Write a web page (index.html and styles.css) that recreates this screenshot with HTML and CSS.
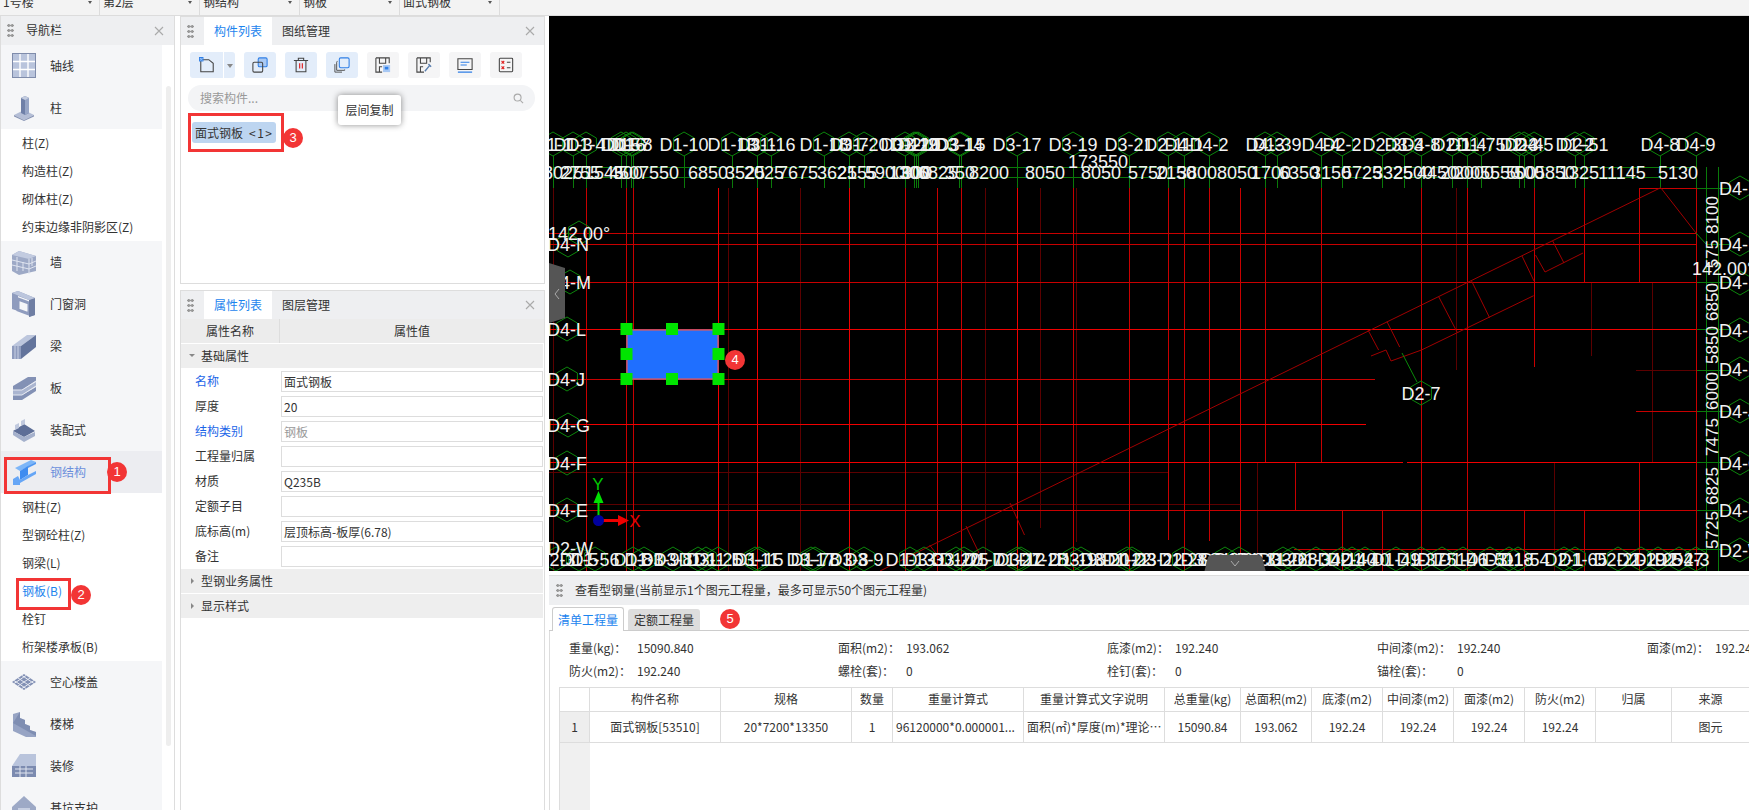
FILE: index.html
```html
<!DOCTYPE html>
<html lang="zh">
<head>
<meta charset="utf-8">
<title>查看型钢量</title>
<link rel="stylesheet" href="styles.css">
</head>
<body>
<div class="page">
  <div class="topbar">
    <div class="top-cell"><span>1号楼</span><i class="top-arrow"></i></div>
    <div class="top-cell"><span>第2层</span><i class="top-arrow"></i></div>
    <div class="top-cell"><span>钢结构</span><i class="top-arrow"></i></div>
    <div class="top-cell"><span>钢板</span><i class="top-arrow"></i></div>
    <div class="top-cell"><span>面式钢板</span><i class="top-arrow"></i></div>
  </div>
  <div class="main">
    <aside class="nav">
      <div class="panel-head"><i class="grip"></i><span class="nav-title">导航栏</span>
        <svg class="close" viewBox="0 0 10 10"><path d="M1 1L9 9M9 1L1 9"/></svg></div>
      <div class="nav-body">
        <div class="nav-list">
          <div class="nav-row"><svg class="nav-ico" viewBox="0 0 24 26"><rect x="0.5" y="0.5" width="23" height="24" fill="#b9c4dc" stroke="#7f8cab"/><path d="M8 1V24M16 1V24M1 8.5H23M1 16.5H23" stroke="#fff" stroke-width="1.4"/></svg><span>轴线</span></div>
          <div class="nav-row"><svg class="nav-ico" viewBox="0 0 24 26"><path d="M2 20L12 15L22 20L12 25Z" fill="#b4bed6"/><path d="M2 20V21.5L12 26V25ZM22 20V21.5L12 26V25Z" fill="#8894b4"/><path d="M9 3L13 1L17 3V18L13 20L9 18Z" fill="#6f80a8"/><path d="M13 4V20L17 18V3Z" fill="#96a5c6"/><path d="M9 3L13 1L17 3L13 5Z" fill="#c3cce0"/></svg><span>柱</span></div>
          <div class="nav-sub">柱(Z)</div>
          <div class="nav-sub">构造柱(Z)</div>
          <div class="nav-sub">砌体柱(Z)</div>
          <div class="nav-sub">约束边缘非阴影区(Z)</div>
          <div class="nav-row"><svg class="nav-ico" viewBox="0 0 24 26"><path d="M0 6L7 2L24 7V22L7 26L0 22Z" fill="#9da9c6"/><path d="M0 6L7 2L24 7L17 10Z" fill="#c2cbe0"/><path d="M17 10V25M0 11L17 15L24 12M0 16L17 20L24 17M5 8V22M11 13V22M20 9V17" stroke="#dfe4ef" stroke-width="1" fill="none"/></svg><span>墙</span></div>
          <div class="nav-row"><svg class="nav-ico" viewBox="0 0 24 26"><path d="M0 2L6 0L23 7V24L17 26L17 9L6 5V20L0 18Z" fill="#8f9cbe"/><path d="M6 8L17 12V23L6 19Z" fill="none" stroke="#8f9cbe" stroke-width="3"/><path d="M17 9L23 7V24L17 26Z" fill="#6f7ea3"/><path d="M0 2L6 0L23 7L17 9Z" fill="#bcc6dd"/></svg><span>门窗洞</span></div>
          <div class="nav-row"><svg class="nav-ico" viewBox="0 0 24 26"><path d="M0 13L15 2L24 2L9 13Z" fill="#bcc6dd"/><path d="M0 13H9V26H0Z" fill="#8f9cbe"/><path d="M9 13L24 2V14L9 26Z" fill="#63749c"/><path d="M3 13V26M6 13V26" stroke="#c9d1e4"/></svg><span>梁</span></div>
          <div class="nav-row"><svg class="nav-ico" viewBox="0 0 24 26"><path d="M1 11L16 2L24 2V6L10 15H1Z" fill="#8391b5"/><path d="M1 15H10L24 7V11L10 20H1Z" fill="#aab5d0"/><path d="M1 20H10L24 12V16L10 25H1Z" fill="#8391b5"/><path d="M1 15H10L24 6M1 20H10L24 11" stroke="#e5e8f1" fill="none"/></svg><span>板</span></div>
          <div class="nav-row"><svg class="nav-ico" viewBox="0 0 24 26"><path d="M1 14L12 7L23 14L12 20Z" fill="#5d6e97"/><path d="M1 14V18L12 25L23 19V15L12 20Z" fill="#a5b1cc"/><path d="M3 8L7 6V11L3 13ZM9 4L13 2V7L9 9Z" fill="#c0c9de"/></svg><span>装配式</span></div>
          <div class="nav-row nav-on"><svg class="nav-ico" viewBox="0 0 24 26"><path d="M3 9L19 1L24 3L8 12Z" fill="#7db6f8"/><path d="M8 12L16 7V16L8 21Z" fill="#3f8cf0"/><path d="M16 7L24 3V5L16 9Z" fill="#4f97f2"/><path d="M1 20L6 17L8 21L16 16L24 12V15L8 24V26H1Z" fill="#66a6f6"/></svg><span>钢结构</span></div>
          <div class="nav-sub">钢柱(Z)</div>
          <div class="nav-sub">型钢砼柱(Z)</div>
          <div class="nav-sub">钢梁(L)</div>
          <div class="nav-sub nav-cur">钢板(B)</div>
          <div class="nav-sub">栓钉</div>
          <div class="nav-sub">桁架楼承板(B)</div>
          <div class="nav-row"><svg class="nav-ico" viewBox="0 0 24 26"><path d="M0 13L12 5L24 13L12 21Z" fill="#8391b5"/><path d="M6 9L18 17M10 6.500L22 14.500M2 11.500L14 19.500M18 9L6 17M14 6.500L2 14.500M22 11.500L10 19.500" stroke="#e4e8f1"/></svg><span>空心楼盖</span></div>
          <div class="nav-row"><svg class="nav-ico" viewBox="0 0 24 26"><path d="M1 3L8 1V7L13 9V13L18 15V19L24 21V26H14L1 20Z" fill="#97a4c4"/><path d="M8 1V7L13 9V13L18 15V19L24 21L24 25L1 12Z" fill="#6c7ca4" opacity=".55"/></svg><span>楼梯</span></div>
          <div class="nav-row"><svg class="nav-ico" viewBox="0 0 24 26"><path d="M8 1H24V13H0Z" fill="#b9c4dc"/><path d="M0 13H24V24H0Z" fill="#7c8bb0"/><path d="M3 16H21M3 20H21M8 13V24M14 13V24" stroke="#dfe4ef"/></svg><span>装修</span></div>
          <div class="nav-row"><svg class="nav-ico" viewBox="0 0 24 26"><path d="M0 12L12 1L24 12V26H0Z" fill="#9da9c6"/><path d="M6 13H18V24H6Z" fill="#c7cfe2"/></svg><span>基坑支护</span></div>
        </div>
        <i class="nav-thumb"></i>
      </div>
    </aside>

    <section class="mid">
      <div class="panel list-panel">
        <div class="panel-head"><i class="grip"></i><span class="tab tab-on">构件列表</span><span class="tab">图纸管理</span>
          <svg class="close close-mid" viewBox="0 0 10 10"><path d="M1 1L9 9M9 1L1 9"/></svg></div>
        <div class="toolbar">
          <div class="tool tool-split"><div class="tool-main"><svg viewBox="0 0 18 18"><path d="M2 3H11L16 7V16.500H2Z" fill="none" stroke="#444" stroke-width="1.200"/><rect x="0" y="0" width="5" height="5" fill="#2f7fe6"/><path d="M1 1H2V2H1ZM3 1H4V2H3ZM2 2H3V3H2ZM1 3H2V4H1ZM3 3H4V4H3Z" fill="#cfe2fa"/></svg></div><div class="tool-drop"><i></i></div></div>
          <div class="tool"><svg viewBox="0 0 18 18"><rect x="7" y="1" width="10" height="10" rx="1.500" fill="#a9c9f4" stroke="#2f7fe6" stroke-width="1.200"/><rect x="1" y="6" width="11" height="11" rx="1.500" fill="none" stroke="#444" stroke-width="1.200"/></svg></div>
          <div class="tool"><svg viewBox="0 0 18 18"><path d="M1 4H17M6 4V1.500H12V4M3.500 4V16.500H14.500V4" fill="none" stroke="#444" stroke-width="1.200"/><path d="M7.500 7V13M10.500 7V13" stroke="#e02020" stroke-width="1.300"/></svg></div>
          <div class="tool"><svg viewBox="0 0 18 18"><rect x="6" y="1" width="11" height="11" rx="1.500" fill="none" stroke="#2f7fe6" stroke-width="1.200"/><path d="M4 5H3.500Q3 5 3 6V15H12V14M1 8V17H9" fill="none" stroke="#555" stroke-width="1.100"/></svg></div>
          <div class="tool tool-gray"><svg viewBox="0 0 18 18"><path d="M1 1H16V7M1 1V17H8M5 1V7H12V1M5 17V11H8" fill="none" stroke="#444" stroke-width="1.200"/><rect x="9" y="9" width="8" height="8" fill="#a9c9f4"/><rect x="11" y="11" width="4" height="3" fill="#2f7fe6"/></svg></div>
          <div class="tool tool-gray"><svg viewBox="0 0 18 18"><path d="M1 1H16V6M1 1V17H9M5 1V7H12V1M5 17V11H8" fill="none" stroke="#444" stroke-width="1.200"/><path d="M10 16L15 10M14 8L17 11" stroke="#5a7fb0" stroke-width="1.600"/></svg></div>
          <div class="tool tool-gray"><svg viewBox="0 0 18 18"><path d="M1 2H17V14H1Z" fill="none" stroke="#444" stroke-width="1.200"/><path d="M4 6H14M4 9H11M1 17H17" stroke="#2f7fe6" stroke-width="1.200"/></svg></div>
          <div class="tool tool-gray"><svg viewBox="0 0 18 18"><rect x="1.500" y="1.500" width="15" height="15" rx="1" fill="none" stroke="#444" stroke-width="1.200"/><path d="M4 4.500L7 7.500M7 4.500L4 7.500M4 10.500L7 13.500M7 10.500L4 13.500" stroke="#e02020" stroke-width="1.200"/><path d="M10 6H14M10 12H14" stroke="#444" stroke-width="1.200"/></svg></div>
        </div>
        <div class="search"><span>搜索构件...</span><svg viewBox="0 0 12 12"><circle cx="5" cy="5" r="3.800"/><path d="M8 8L11 11"/></svg></div>
        <div class="item">面式钢板<span class="item-n">&lt;1&gt;</span></div>
      </div>

      <div class="panel prop-panel">
        <div class="panel-head"><i class="grip"></i><span class="tab tab-on">属性列表</span><span class="tab">图层管理</span>
          <svg class="close close-mid" viewBox="0 0 10 10"><path d="M1 1L9 9M9 1L1 9"/></svg></div>
        <div class="prop-head"><span class="prop-h1">属性名称</span><span class="prop-h2">属性值</span></div>
        <div class="group"><i class="tri-down"></i>基础属性</div>
        <div class="prop"><span class="prop-k prop-blue">名称</span><span class="prop-v">面式钢板</span></div>
        <div class="prop"><span class="prop-k">厚度</span><span class="prop-v">20</span></div>
        <div class="prop"><span class="prop-k prop-blue">结构类别</span><span class="prop-v prop-off">钢板</span></div>
        <div class="prop"><span class="prop-k">工程量归属</span><span class="prop-v"></span></div>
        <div class="prop"><span class="prop-k">材质</span><span class="prop-v">Q235B</span></div>
        <div class="prop"><span class="prop-k">定额子目</span><span class="prop-v"></span></div>
        <div class="prop"><span class="prop-k">底标高(m)</span><span class="prop-v">层顶标高-板厚(6.78)</span></div>
        <div class="prop"><span class="prop-k">备注</span><span class="prop-v"></span></div>
        <div class="group"><i class="tri-right"></i>型钢业务属性</div>
        <div class="group"><i class="tri-right"></i>显示样式</div>
      </div>
    </section>

    <section class="right">
      <div class="canvas">
        <svg class="cad" viewBox="549 16 1200 555" preserveAspectRatio="none">
          <defs><polygon id="hx" points="0,-12 10.400,-6 10.400,6 0,12 -10.400,6 -10.400,-6"/></defs>
          <g class="g-line">
            <path d="M553 167.500H1696M553 177.500H1660"/>
            <path d="M553.500 156V188M573.500 156V188M586.500 156V188M621.500 156V188M626.500 156V188M631.500 156V188M633.500 156V188M684.500 156V188M732.500 156V188M757.500 156V188M771.500 156V188M824.500 156V188M849.500 156V188M864.500 156V188M905.500 156V188M914.500 156V188M916.500 156V188M918.500 156V188M959.500 156V188M961.500 156V188M1017.500 156V188M1073.500 156V188M1129.500 156V188M1168.500 156V188M1184.500 156V188M1209.500 156V188M1265.500 156V188M1277.500 156V188M1321.500 156V188M1342.500 156V188M1382.500 156V188M1404.500 156V188M1421.500 156V188M1452.500 156V188M1467.500 156V188M1481.500 156V188M1519.500 156V188M1524.500 156V188M1534.500 156V188M1575.500 156V188M1584.500 156V188M1660.500 156V188M1696.500 156V188"/>
            <path d="M1706.500 167V571M1718.500 167V571M1696 188.500H1730M1706 244.500H1730M1696 282.500H1730M1696 329.500H1730M1696 370.500H1730M1696 411.500H1730M1696 462.500H1730M1696 510.500H1730M1696 549.500H1730"/>
          </g>
          <g class="r-dim">
            <path d="M553.500 188V571M728.500 188V571M800.500 188V571M985.500 188V571M1040.500 188V528M1076.500 188V542M1456.500 188V370M1591.500 282V356M1652.500 282V462M1257.500 462V571M1554.500 462V571M549 472.500H1168M549 504.500H1240M1636 370.500H1696"/>
          </g>
          <g class="r-mid">
            <path d="M586.500 188V571M626.500 188V571M633.500 188V571M905.500 188V571M937.500 188V571M961.500 188V571M1073.500 188V571M1129.500 188V571M1168.500 188V540M1184.500 188V571M1209.500 188V541M1240.500 188V571M1265.500 188V462M1321.500 188V462M1421.500 188V571M1467.500 188V571M1534.500 188V367M1584.500 188V282M1639.500 188V282M1639.500 462V571M1696.500 188V571M1295.500 462V510M1342.500 510V571M1382.500 510V571M1524.500 510V571M1584.500 510V571M1639.500 188H1696M549 379.500H1375"/>
            <path d="M549 233.500H1696M549 244.500H1696M549 282.500H1696M549 510.500H1696M1294 549.500H1696M1636 411.500H1696"/>
          </g>
          <g class="r-hi">
            <path d="M718.500 188V571M757.500 188V571M849.500 188V571M1017.500 188V571M549 329.500H1696M549 424.500H1366M549 462.500H1403M1407 462.500H1696"/>
          </g>
          <g class="diag">
            <path d="M1660.700 187.700L928 547L880 571M1660.700 187.700L1696 233"/>
            <path d="M1583 253L1545 272L1535.500 255M1533.600 295.700L1421.500 350L1391 361L1386 350L1371 356"/>
            <path d="M1552.700 241L1564 263M1522 256L1534 281M1471.600 281L1489.600 317.700M1438.700 296.700L1457 332M1387 321.700L1399.700 347M1368 330L1378.600 350M1010 503L1024.500 535M966 526L979 553M929.600 545L945 565"/>
          </g>
          <path class="g-thin" d="M1696 233L1706 244M1402 353L1417 382"/>
          <g class="hexes">
            <use href="#hx" x="553" y="144"/><use href="#hx" x="573" y="144"/><use href="#hx" x="586" y="144"/><use href="#hx" x="621" y="144"/><use href="#hx" x="626" y="144"/><use href="#hx" x="631" y="144"/><use href="#hx" x="633" y="144"/><use href="#hx" x="684" y="144"/><use href="#hx" x="732" y="144"/><use href="#hx" x="757" y="144"/><use href="#hx" x="771" y="144"/><use href="#hx" x="824" y="144"/><use href="#hx" x="849" y="144"/><use href="#hx" x="864" y="144"/><use href="#hx" x="905" y="144"/><use href="#hx" x="914" y="144"/><use href="#hx" x="916" y="144"/><use href="#hx" x="918" y="144"/><use href="#hx" x="959" y="144"/><use href="#hx" x="961" y="144"/><use href="#hx" x="1017" y="144"/><use href="#hx" x="1073" y="144"/><use href="#hx" x="1129" y="144"/><use href="#hx" x="1168" y="144"/><use href="#hx" x="1184" y="144"/><use href="#hx" x="1209" y="144"/><use href="#hx" x="1265" y="144"/><use href="#hx" x="1277" y="144"/><use href="#hx" x="1321" y="144"/><use href="#hx" x="1342" y="144"/><use href="#hx" x="1382" y="144"/><use href="#hx" x="1404" y="144"/><use href="#hx" x="1421" y="144"/><use href="#hx" x="1452" y="144"/><use href="#hx" x="1467" y="144"/><use href="#hx" x="1481" y="144"/><use href="#hx" x="1519" y="144"/><use href="#hx" x="1524" y="144"/><use href="#hx" x="1534" y="144"/><use href="#hx" x="1575" y="144"/><use href="#hx" x="1584" y="144"/><use href="#hx" x="1660" y="144"/><use href="#hx" x="1696" y="144"/>
            <use href="#hx" x="579" y="233"/><use href="#hx" x="568" y="245"/><use href="#hx" x="570" y="282"/><use href="#hx" x="567" y="329"/><use href="#hx" x="567" y="379"/><use href="#hx" x="568" y="425"/><use href="#hx" x="567" y="463"/><use href="#hx" x="567" y="510"/>
            <use href="#hx" x="1740" y="188"/><use href="#hx" x="1740" y="244"/><use href="#hx" x="1740" y="283"/><use href="#hx" x="1740" y="330"/><use href="#hx" x="1740" y="369"/><use href="#hx" x="1740" y="411"/><use href="#hx" x="1740" y="463"/><use href="#hx" x="1740" y="510"/><use href="#hx" x="1740" y="550"/>
            <use href="#hx" x="1421" y="393"/>
            <use href="#hx" x="556" y="559"/><use href="#hx" x="579" y="559"/><use href="#hx" x="595" y="559"/><use href="#hx" x="633" y="559"/><use href="#hx" x="644" y="559"/><use href="#hx" x="673" y="559"/><use href="#hx" x="698" y="559"/><use href="#hx" x="706" y="559"/><use href="#hx" x="718" y="559"/><use href="#hx" x="755" y="559"/><use href="#hx" x="759" y="559"/><use href="#hx" x="811" y="559"/><use href="#hx" x="815" y="559"/><use href="#hx" x="849" y="559"/><use href="#hx" x="864" y="559"/><use href="#hx" x="910" y="559"/><use href="#hx" x="924" y="559"/><use href="#hx" x="956" y="559"/><use href="#hx" x="964" y="559"/><use href="#hx" x="983" y="559"/><use href="#hx" x="1017" y="559"/><use href="#hx" x="1021" y="559"/><use href="#hx" x="1073" y="559"/><use href="#hx" x="1081" y="559"/><use href="#hx" x="1127" y="559"/><use href="#hx" x="1132" y="559"/><use href="#hx" x="1183" y="559"/><use href="#hx" x="1225" y="559"/><use href="#hx" x="1239" y="559"/><use href="#hx" x="1283" y="559"/><use href="#hx" x="1293" y="559"/><use href="#hx" x="1316" y="559"/><use href="#hx" x="1342" y="559"/><use href="#hx" x="1352" y="559"/><use href="#hx" x="1365" y="559"/><use href="#hx" x="1396" y="559"/><use href="#hx" x="1421" y="559"/><use href="#hx" x="1442" y="559"/><use href="#hx" x="1463" y="559"/><use href="#hx" x="1490" y="559"/><use href="#hx" x="1509" y="559"/><use href="#hx" x="1518" y="559"/><use href="#hx" x="1564" y="559"/><use href="#hx" x="1575" y="559"/><use href="#hx" x="1618" y="559"/><use href="#hx" x="1641" y="559"/><use href="#hx" x="1658" y="559"/><use href="#hx" x="1679" y="559"/><use href="#hx" x="1696" y="559"/>
          </g>
          <g class="cad-text">
            <text x="553" y="151">D1-1</text><text x="573" y="151">D1-3</text><text x="586" y="151">D1-4</text><text x="621" y="151">D1-5</text><text x="626" y="151">D1-6</text><text x="631" y="151">D1-7</text><text x="633" y="151">D1-8</text><text x="684" y="151">D1-10</text><text x="732" y="151">D1-13</text><text x="757" y="151">D3-1</text><text x="771" y="151">D1-16</text><text x="824" y="151">D1-18</text><text x="849" y="151">D3-7</text><text x="864" y="151">D1-20</text><text x="905" y="151">D3-12</text><text x="914" y="151">D1-19</text><text x="916" y="151">D3-10</text><text x="918" y="151">D2-2</text><text x="959" y="151">D3-14</text><text x="961" y="151">D3-15</text><text x="1017" y="151">D3-17</text><text x="1073" y="151">D3-19</text><text x="1129" y="151">D3-21</text><text x="1168" y="151">D2-11</text><text x="1184" y="151">D4-1</text><text x="1209" y="151">D4-2</text><text x="1265" y="151">D4-3</text><text x="1277" y="151">D1-39</text><text x="1321" y="151">D4-4</text><text x="1342" y="151">D2-2</text><text x="1382" y="151">D2-3</text><text x="1404" y="151">D3-3</text><text x="1421" y="151">D4-8</text><text x="1452" y="151">D2-1</text><text x="1467" y="151">D1-4</text><text x="1481" y="151">D1-75</text><text x="1519" y="151">D2-3</text><text x="1524" y="151">D2-4</text><text x="1534" y="151">D4-5</text><text x="1575" y="151">D1-2</text><text x="1584" y="151">D2-51</text><text x="1660" y="151">D4-8</text><text x="1696" y="151">D4-9</text>
            <text x="563" y="179">8025</text><text x="580" y="179">2755</text><text x="604" y="179">1545</text><text x="624" y="179">450</text><text x="628" y="179">300</text><text x="659" y="179">7550</text><text x="708" y="179">6850</text><text x="745" y="179">3525</text><text x="764" y="179">2025</text><text x="798" y="179">7675</text><text x="837" y="179">3625</text><text x="857" y="179">2155</text><text x="885" y="179">5900</text><text x="909" y="179">1300</text><text x="915" y="179">300</text><text x="917" y="179">300</text><text x="938" y="179">6825</text><text x="960" y="179">350</text><text x="989" y="179">8200</text><text x="1045" y="179">8050</text><text x="1101" y="179">8050</text><text x="1148" y="179">5750</text><text x="1176" y="179">2150</text><text x="1197" y="179">3800</text><text x="1237" y="179">8050</text><text x="1271" y="179">1700</text><text x="1299" y="179">6350</text><text x="1331" y="179">3150</text><text x="1362" y="179">5725</text><text x="1393" y="179">3325</text><text x="1413" y="179">2500</text><text x="1437" y="179">4450</text><text x="1460" y="179">2000</text><text x="1474" y="179">2000</text><text x="1500" y="179">5550</text><text x="1521" y="179">500</text><text x="1529" y="179">500</text><text x="1555" y="179">5850</text><text x="1579" y="179">1325</text><text x="1622" y="179">11145</text><text x="1678" y="179">5130</text>
            <text x="1098" y="168">173550</text>
            <text class="start" x="548" y="240">142.00°</text><text class="start" x="1692" y="275">142.00°</text>
            <text class="start" x="547" y="251">D4-N</text><text class="start" x="547" y="289">D4-M</text><text class="start" x="547" y="336">D4-L</text><text class="start" x="547" y="386">D4-J</text><text class="start" x="547" y="432">D4-G</text><text class="start" x="547" y="470">D4-F</text><text class="start" x="547" y="517">D4-E</text><text class="start" x="547" y="555">D2-W</text>
            <text class="start" x="1719" y="195">D4-P</text><text class="start" x="1719" y="251">D4-N</text><text class="start" x="1719" y="289">D4-M</text><text class="start" x="1719" y="337">D4-L</text><text class="start" x="1719" y="376">D4-K</text><text class="start" x="1719" y="418">D4-J</text><text class="start" x="1719" y="470">D4-G</text><text class="start" x="1719" y="517">D4-E</text><text class="start" x="1719" y="557">D2-W</text>
            <text x="1421" y="400">D2-7</text>
            <text class="vt vt1" x="0" y="0">8100</text><text class="vt vt2" x="0" y="0">575</text><text class="vt vt3" x="0" y="0">6850</text><text class="vt vt4" x="0" y="0">5850</text><text class="vt vt5" x="0" y="0">6000</text><text class="vt vt6" x="0" y="0">7475</text><text class="vt vt7" x="0" y="0">6825</text><text class="vt vt8" x="0" y="0">5725</text>
            <text x="556" y="566">D2-3</text><text x="579" y="566">D1-5</text><text x="595" y="566">D1-56</text><text x="633" y="566">D1-8</text><text x="644" y="566">D1-3</text><text x="660" y="566">D1-9</text><text x="673" y="566">D3-8</text><text x="698" y="566">D1-1</text><text x="706" y="566">D3-1</text><text x="718" y="566">D1-25</text><text x="755" y="566">D3-11</text><text x="759" y="566">D1-15</text><text x="811" y="566">D3-17</text><text x="815" y="566">D1-78</text><text x="849" y="566">D3-8</text><text x="864" y="566">D3-9</text><text x="910" y="566">D1-13</text><text x="924" y="566">D3-3</text><text x="956" y="566">D3-20</text><text x="964" y="566">D1-25</text><text x="983" y="566">D1-7</text><text x="1017" y="566">D1-27</text><text x="1021" y="566">D3-12</text><text x="1043" y="566">D1-28</text><text x="1073" y="566">D1-19</text><text x="1081" y="566">D3-18</text><text x="1105" y="566">D3-20</text><text x="1127" y="566">D1-22</text><text x="1132" y="566">D1-23</text><text x="1158" y="566">D3-22</text><text x="1183" y="566">D1-28</text><text x="1205" y="566">D3-24</text><text x="1225" y="566">D1-30</text><text x="1239" y="566">D1-33</text><text x="1261" y="566">D1-31</text><text x="1283" y="566">D3-26</text><text x="1293" y="566">D3-28</text><text x="1316" y="566">D1-34</text><text x="1342" y="566">D4-14</text><text x="1352" y="566">D2-40</text><text x="1365" y="566">D1-40</text><text x="1396" y="566">D1-49</text><text x="1421" y="566">D1-37</text><text x="1442" y="566">D1-51</text><text x="1463" y="566">D1-46</text><text x="1490" y="566">D1-51</text><text x="1509" y="566">D3-18</text><text x="1525" y="566">D1-54</text><text x="1564" y="566">D2-1</text><text x="1583" y="566">D1-65</text><text x="1618" y="566">D2-21</text><text x="1641" y="566">D2-19</text><text x="1658" y="566">D2-25</text><text x="1679" y="566">D2-47</text><text x="1690" y="566">D2-3</text>
          </g>
          <rect class="plate" x="627" y="330" width="91" height="49"/>
          <g class="handles">
            <rect x="620.500" y="323" width="12" height="12"/><rect x="666" y="323" width="12" height="12"/><rect x="712.500" y="323" width="12" height="12"/>
            <rect x="620.500" y="348" width="12" height="12"/><rect x="712.500" y="348" width="12" height="12"/>
            <rect x="620.500" y="373" width="12" height="12"/><rect x="666" y="373" width="12" height="12"/><rect x="712.500" y="373" width="12" height="12"/>
          </g>
          <path class="axis-y" d="M597.500 520V503H593.500L598.500 491L603.500 503H599.500V520Z"/>
          <path class="axis-x" d="M600 519H618V515L629 520.500L618 526V522H600Z"/>
          <circle class="axis-o" cx="598.500" cy="520.500" r="5.500"/>
          <text class="axis-yt" x="598" y="490">Y</text>
          <text class="axis-xt" x="635" y="527">X</text>
          <path class="handle" d="M549 263L565 268V318L549 323Z"/>
          <path class="chev" d="M559 289L555 294L559 299"/>
          <path class="handle" d="M1204.500 571L1208 557Q1209 555 1212 555H1258Q1261 555 1262 557L1265.700 571Z"/>
          <path class="chev" d="M1231 561L1235 566L1239 561"/>
        </svg>
      </div>
      <div class="qty">
        <div class="qty-head"><i class="grip"></i><span>查看型钢量(当前显示1个图元工程量，最多可显示50个图元工程量)</span></div>
        <div class="qty-tabs"><span class="qtab qtab-on">清单工程量</span><span class="qtab">定额工程量</span></div>
        <div class="qty-body">
          <div class="info">
            <div class="info-c"><span class="info-k">重量(kg)：</span>15090.840</div>
            <div class="info-c"><span class="info-k">面积(m2)：</span>193.062</div>
            <div class="info-c"><span class="info-k">底漆(m2)：</span>192.240</div>
            <div class="info-c"><span class="info-k info-w">中间漆(m2)：</span>192.240</div>
            <div class="info-c"><span class="info-k">面漆(m2)：</span>192.240</div>
            <div class="info-c"><span class="info-k">防火(m2)：</span>192.240</div>
            <div class="info-c"><span class="info-k">螺栓(套)：</span>0</div>
            <div class="info-c"><span class="info-k">栓钉(套)：</span>0</div>
            <div class="info-c"><span class="info-k info-w">锚栓(套)：</span>0</div>
          </div>
          <div class="grid">
            <div class="c h"></div><div class="c h">构件名称</div><div class="c h">规格</div><div class="c h">数量</div><div class="c h">重量计算式</div><div class="c h">重量计算式文字说明</div><div class="c h">总重量(kg)</div><div class="c h">总面积(m2)</div><div class="c h">底漆(m2)</div><div class="c h">中间漆(m2)</div><div class="c h">面漆(m2)</div><div class="c h">防火(m2)</div><div class="c h">归属</div><div class="c h">来源</div>
            <div class="c idx">1</div><div class="c">面式钢板[53510]</div><div class="c">20*7200*13350</div><div class="c">1</div><div class="c el">96120000*0.000001...</div><div class="c el">面积(㎡)*厚度(m)*理论重量(kg/m³)...</div><div class="c">15090.84</div><div class="c">193.062</div><div class="c">192.24</div><div class="c">192.24</div><div class="c">192.24</div><div class="c">192.24</div><div class="c"></div><div class="c">图元</div>
            <div class="fill"></div>
          </div>
        </div>
      </div>
    </section>
  </div>

  <div class="tip">层间复制</div>
  <i class="mark mark1"></i><i class="mark mark2"></i><i class="mark mark3"></i>
  <b class="badge b1">1</b><b class="badge b2">2</b><b class="badge b3">3</b><b class="badge b4">4</b><b class="badge b5">5</b>
</div>
</body>
</html>
```
FILE: styles.css
```css
* { box-sizing: border-box; }
html, body { margin: 0; padding: 0; height: 100%; overflow: hidden; background: #fff; }
body { font: 12px/1.2 "Noto Sans CJK SC", "Noto Sans", sans-serif; color: #333; }
i, b { font-style: normal; display: block; }
.page { position: relative; width: 1749px; height: 810px; overflow: hidden; display: flex; flex-direction: column; }

.topbar { height: 16px; flex: none; display: flex; background: #f3f3f3; border-bottom: 1px solid #dcdcdc; }
.top-cell { width: 100px; height: 15px; overflow: hidden; border-right: 1px solid #dcdcdc; position: relative; padding-left: 3px; line-height: 4px; font-size: 12px; }
.top-arrow { position: absolute; right: 7px; top: 1px; border: 2px solid transparent; border-top: 3px solid #555; }

.main { flex: 1; display: flex; min-height: 0; }

.panel-head { height: 29px; flex: none; display: flex; align-items: center; background: #eeeff1; position: relative; }
.grip { width: 7px; height: 15px; margin-left: 6px; flex: none; background: radial-gradient(circle, #999 1.4px, transparent 1.7px) 0 0 / 3.5px 5px; }
.close { width: 10px; height: 10px; margin-left: auto; margin-right: 10px; flex: none; }
.close path { stroke: #aaa; stroke-width: 1.1; fill: none; }
.close-mid { margin-right: 9px; }

.nav { width: 175px; flex: none; margin-right: 5px; border-right: 1px solid #ddd; border-left: 1px solid #ddd; display: flex; flex-direction: column; }
.nav-title { margin-left: 12px; }
.nav-body { flex: 1; position: relative; overflow: hidden; }
.nav-list { width: 161px; }
.nav-row { height: 42px; display: flex; align-items: center; padding-left: 11px; background: #f5f6f8; }
.nav-row span { margin-left: 14px; }
.nav-ico { width: 24px; height: 26px; flex: none; }
.nav-on { background: #ecedf1; color: #6b8fdc; }
.nav-sub { height: 28px; line-height: 28px; padding-left: 21px; background: #fff; }
.nav-cur { color: #1c84ee; }
.nav-thumb { position: absolute; left: 165px; top: 41px; width: 5px; height: 660px; background: #eeeeee; border-radius: 3px; }

.mid { width: 365px; flex: none; margin-right: 4px; display: flex; flex-direction: column; gap: 6px; }
.panel { border: 1px solid #ddd; display: flex; flex-direction: column; }
.panel .panel-head { height: 28px; }
.list-panel { height: 268px; flex: none; }
.prop-panel { flex: 1; border-bottom: 0; }
.tab { width: 68px; height: 28px; line-height: 28px; text-align: center; font-size: 12px; flex: none; }
.tab-on { background: #fff; color: #1c84ee; margin-left: 10px; }

.toolbar { display: flex; gap: 9px; padding: 7px 0 0 9px; }
.tool { width: 32px; height: 26px; border-radius: 3px; background: #e3edfa; display: flex; align-items: center; justify-content: center; }
.tool svg { width: 16px; height: 16px; }
.tool-gray { background: #f5f5f6; }
.tool-split { width: 45px; gap: 1px; background: #fff; justify-content: flex-start; }
.tool-main { width: 33px; height: 26px; background: #e3edfa; border-radius: 3px 0 0 3px; display: flex; align-items: center; justify-content: center; }
.tool-drop { width: 11px; height: 26px; background: #e3edfa; border-radius: 0 3px 3px 0; display: flex; align-items: center; justify-content: center; }
.tool-drop i { border: 3px solid transparent; border-top: 4px solid #888; margin-top: 4px; }

.search { margin: 7px 9px 0 7px; height: 26px; border-radius: 13px; background: #f3f4f6; display: flex; align-items: center; justify-content: space-between; padding: 0 11px 0 12px; color: #999; }
.search svg { width: 11px; height: 11px; }
.search circle, .search path { fill: none; stroke: #aaa; stroke-width: 1.2; }
.item { margin: 11px 0 0 11px; width: 84px; height: 21px; line-height: 21px; background: #bdd5f0; border-radius: 3px; padding-left: 3px; white-space: nowrap; }
.item-n { margin-left: 6px; letter-spacing: 1.5px; }

.prop-head { height: 25px; flex: none; display: flex; background: #ececec; line-height: 24px; text-align: center; border-bottom: 1px solid #fff; }
.prop-h1 { width: 99px; border-right: 1px solid #ddd; }
.prop-h2 { flex: 1; }
.group { height: 24px; flex: none; margin-bottom: 1px; margin-right: 1px; background: #eee; line-height: 24px; padding-left: 20px; position: relative; }
.tri-down { position: absolute; left: 8px; top: 10px; border: 3px solid transparent; border-top: 3px solid #888; }
.tri-right { position: absolute; left: 10px; top: 9px; border: 3px solid transparent; border-left: 3px solid #888; }
.prop { height: 25px; flex: none; display: flex; align-items: center; }
.prop-k { width: 100px; padding-left: 14px; flex: none; }
.prop-blue { color: #1c66e8; }
.prop-v { flex: 1; height: 21px; line-height: 19px; margin-right: 1px; padding-left: 2px; border: 1px solid #ddd; background: #fff; }
.prop-off { color: #999; }

.right { flex: 1; min-width: 0; display: flex; flex-direction: column; }
.canvas { height: 555px; flex: none; background: #000; position: relative; overflow: hidden; }
.cad { display: block; width: 100%; height: 100%; background: #000; }
.cad path { fill: none; }
.r-hi path { stroke: #f00000; stroke-width: 1; shape-rendering: crispEdges; }
.r-mid path { stroke: #c80000; stroke-width: 1; shape-rendering: crispEdges; }
.r-dim path { stroke: #5c0000; stroke-width: 1; shape-rendering: crispEdges; }
.g-line path { stroke: #0a7a0a; stroke-width: 1; shape-rendering: crispEdges; }
.g-thin { stroke: #0a8a0a; stroke-width: 1; }
.diag path { stroke: #a00000; stroke-width: 1; }
.hexes use { fill: none; stroke: #0c860c; stroke-width: 1; }
.cad-text text { fill: #f2f2f2; font: 18px "Liberation Sans", sans-serif; text-anchor: middle; }
.cad-text .start { text-anchor: start; }
.cad-text .vt { text-anchor: middle; font-size: 17px; }
.vt1 { transform: translate(1718px, 215px) rotate(-90deg); }
.vt2 { transform: translate(1718px, 254px) rotate(-90deg); }
.vt3 { transform: translate(1718px, 302px) rotate(-90deg); }
.vt4 { transform: translate(1718px, 345px) rotate(-90deg); }
.vt5 { transform: translate(1718px, 391px) rotate(-90deg); }
.vt6 { transform: translate(1718px, 437px) rotate(-90deg); }
.vt7 { transform: translate(1718px, 486px) rotate(-90deg); }
.vt8 { transform: translate(1718px, 530px) rotate(-90deg); }
.plate { fill: #1f6fff; stroke: #b8607f; stroke-width: 1.5; }
.handles rect { fill: #00e400; }
.cad .axis-y { fill: #00e000; }
.cad .axis-x { fill: #f00000; }
.axis-o { fill: #00009e; }
.axis-yt { fill: #00c800; font: 17px "Liberation Sans", sans-serif; text-anchor: middle; }
.axis-xt { fill: #e80000; font: 17px "Liberation Sans", sans-serif; text-anchor: middle; }
.cad .handle { fill: #555; }
.cad .chev { stroke: #aaa; stroke-width: 1; }

.qty { flex: 1; margin-top: 4px; display: flex; flex-direction: column; min-height: 0; }
.qty-head { height: 30px; flex: none; display: flex; align-items: center; background: #eeeff1; border-top: 1px solid #ddd; }
.qty-head .grip { margin-left: 7px; }
.qty-head span { margin-left: 12px; }
.qty-tabs { height: 26px; flex: none; display: flex; align-items: flex-end; padding-left: 3px; gap: 4px; border-bottom: 1px solid #ccc; }
.qtab { width: 72px; height: 21px; line-height: 21px; text-align: center; background: #ddd; border-radius: 3px 3px 0 0; }
.qtab-on { height: 24px; line-height: 24px; background: #fff; color: #1c84ee; border: 1px solid #ccc; border-bottom: 0; margin-bottom: -1px; position: relative; }
.qty-body { flex: 1; display: flex; flex-direction: column; min-height: 0; border-left: 1px solid #ddd; padding-left: 9px; }
.info { flex: none; display: grid; grid-template-columns: 269px 269px 270px 270px 1fr; grid-auto-rows: 23px; padding: 5px 0 0 10px; margin-bottom: 5px; }
.info-c { line-height: 23px; white-space: nowrap; display: flex; }
.info-k { width: 68px; flex: none; }
.info-w { width: 80px; }

.grid { flex: 1; min-height: 0; display: grid; grid-template-columns: 30px 131px 131px 41px 131px 141px 76px 71px 71px 71px 71px 71px 76px 78px; grid-template-rows: 24px 31px 1fr; border-top: 1px solid #ddd; border-left: 1px solid #ddd; }
.c { border-right: 1px solid #ddd; border-bottom: 1px solid #ddd; display: flex; align-items: center; justify-content: center; white-space: nowrap; overflow: hidden; min-width: 0; }
.h { background: #fff; }
.idx { background: #eee; }
.el { justify-content: flex-start; padding-left: 3px; text-overflow: ellipsis; display: block; line-height: 30px; }
.fill { background: #f0f0f0; }

.tip { position: absolute; left: 338px; top: 95px; width: 63px; height: 30px; line-height: 30px; text-align: center; background: #fff; border-radius: 3px; box-shadow: 0 0 6px rgba(0, 0, 0, .45); }
.mark { position: absolute; border: 3px solid #f23535; }
.mark1 { left: 4px; top: 457px; width: 107px; height: 37px; }
.mark2 { left: 16px; top: 578px; width: 55px; height: 32px; }
.mark3 { left: 188px; top: 113px; width: 96px; height: 39px; }
.badge { position: absolute; width: 20px; height: 20px; line-height: 20px; border-radius: 50%; background: #f23535; color: #fff; text-align: center; font: 400 13px/20px "Liberation Sans", sans-serif; }
.b1 { left: 107px; top: 462px; }
.b2 { left: 71px; top: 585px; }
.b3 { left: 283px; top: 128px; }
.b4 { left: 725px; top: 350px; }
.b5 { left: 720px; top: 609px; }
```
